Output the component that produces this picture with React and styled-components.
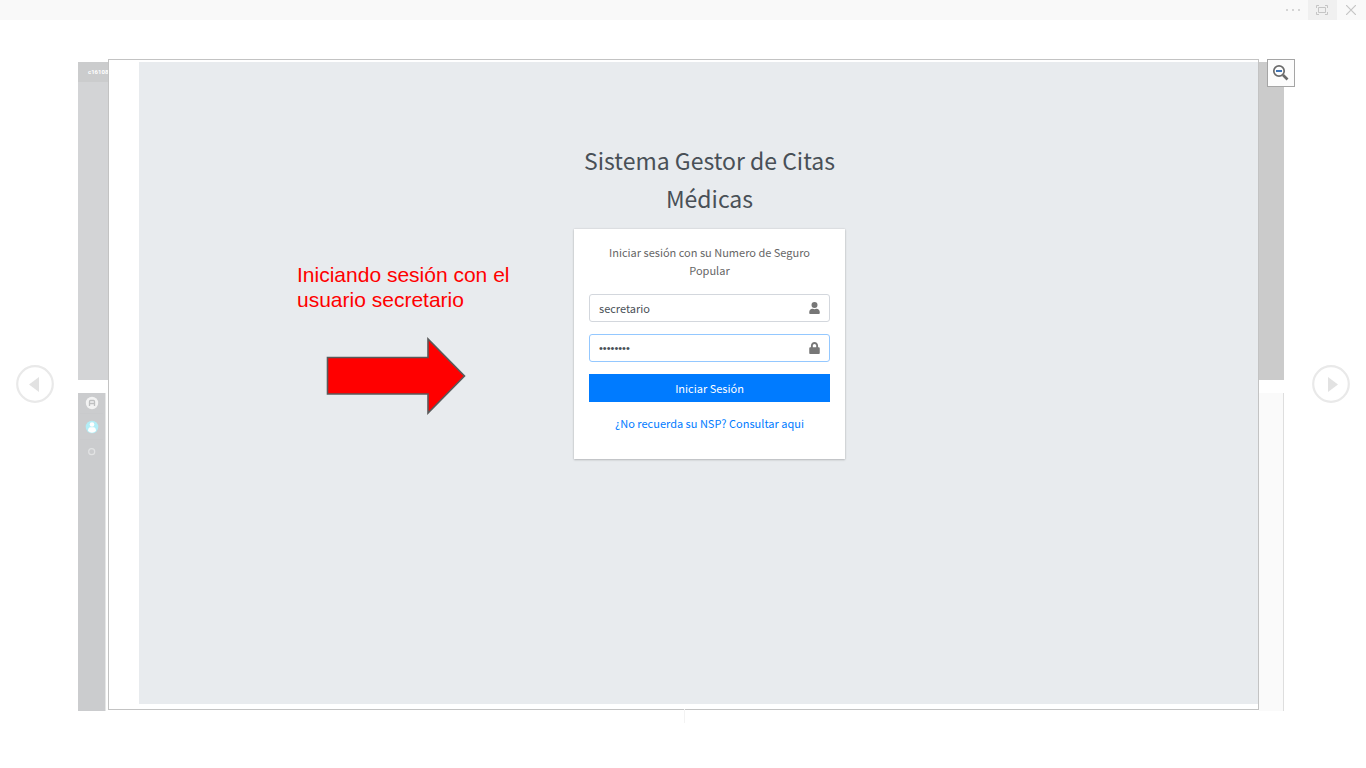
import React from "react";
import styled, { createGlobalStyle } from "styled-components";

const GlobalStyle = createGlobalStyle`
  *, *::before, *::after { box-sizing: border-box; }
  body { margin: 0; background: #fff; font-family: "Liberation Sans", Arial, sans-serif; }
  button, input { font: inherit; }
  h1, p { margin: 0; font-weight: 400; }
`;

const Page = styled.div`
  min-height: 100vh;
  display: flex;
  flex-direction: column;
`;

const TopBar = styled.header`
  height: 20px;
  display: flex;
  justify-content: flex-end;
  background: #f9f9f9;
`;

const BarButton = styled.button`
  width: 29px;
  height: 20px;
  padding: 0 2px 0 0;
  border: 0;
  display: grid;
  place-items: center;
  background: ${(p) => (p.$active ? "#f0f0f0" : "transparent")};
`;

const Viewer = styled.main`
  flex: 1;
  display: flex;
  padding: 39px 0 57px;
`;

const Side = styled.div`
  width: ${(p) => p.$width}px;
  flex: none;
  display: flex;
  align-items: center;
  padding: 0 16px 2px;
  justify-content: ${(p) => p.$align};
`;

const NavButton = styled.button`
  width: 38px;
  height: 38px;
  padding: 0;
  border: 0;
  background: transparent;
  svg { display: block; }
`;

const Strip = styled.div`
  width: ${(p) => p.$width}px;
  flex: none;
  display: flex;
  flex-direction: column;
  gap: 13px;
  padding-top: 3px;
`;

const Slide = styled.div`
  flex: 1 1 0;
  overflow: hidden;
  background: ${(p) => p.$bg};
`;

const SlideTitle = styled.div`
  height: 20px;
  padding-left: 10px;
  font: 700 6px/20px Roboto, sans-serif;
  color: #fff;
  background: #cbcccd;
`;

const MenuSlide = styled(Slide)`
  margin-right: 2px;
  border-right: 1px solid #e6e7e7;
  svg { display: block; }
`;

const EmptySlide = styled(Slide)`
  border-right: 1px solid #dedede;
`;

const Frame = styled.section`
  position: relative;
  flex: 1;
  display: flex;
  margin-bottom: 1px;
  padding: 2px 0 5px 30px;
  border: 1px solid #c3c3c3;
  background: #fff;

  &::after {
    content: "";
    position: absolute;
    top: 100%;
    left: 50%;
    width: 1px;
    height: 14px;
    background: #f3f3f3;
  }
`;

const ZoomButton = styled.button`
  position: absolute;
  top: -1px;
  right: -37px;
  width: 28px;
  height: 28px;
  padding: 0 2px 2px 0;
  display: grid;
  place-items: center;
  border: 1px solid #a5a5a5;
  background: #fcfcfc;
`;

const Canvas = styled.div`
  flex: 1;
  display: grid;
  grid-template-columns: 1fr 271px 1fr;
  align-items: start;
  padding: 79px 0 24px 22px;
  background: #e8ebee;
`;

const Note = styled.div`
  justify-self: end;
  width: 277px;
  padding-top: 121px;
  font-size: 21px;
  line-height: 25px;
  color: #f00;
  svg { display: block; margin: 25px 0 0 29px; }
`;

const Login = styled.form`
  font-family: "Noto Sans CJK SC", sans-serif;
  font-size: 11px;
  text-align: center;
`;

const Title = styled.h1`
  margin-bottom: 12px;
  font-size: 23px;
  line-height: 38px;
  color: #495057;
`;

const Card = styled.div`
  height: 230px;
  padding: 14px 15px;
  display: flex;
  flex-direction: column;
  background: #fff;
  box-shadow: 0 0 2px rgba(0, 0, 0, 0.13), 0 1px 2px rgba(0, 0, 0, 0.18);
`;

const Intro = styled.p`
  padding: 0 16px;
  margin-bottom: 15px;
  line-height: 18px;
  color: #666;
`;

const Field = styled.label`
  height: 28px;
  margin-bottom: 12px;
  padding: 0 9px;
  display: flex;
  align-items: center;
  border: 1px solid ${(p) => (p.$focused ? "#94c8ff" : "#d3d7dd")};
  border-radius: 3px;
  color: #777;
`;

const TextBox = styled.input`
  flex: 1;
  min-width: 0;
  padding: 0;
  border: 0;
  outline: 0;
  background: transparent;
  color: #495057;
  line-height: 18px;
  &[type="password"] { font-family: "Liberation Sans", sans-serif; }
`;

const Submit = styled.button`
  height: 28px;
  padding: 0;
  border: 0;
  line-height: 18px;
  color: #fff;
  background: #007bff;
`;

const Help = styled.a`
  margin-top: 12px;
  line-height: 18px;
  color: #007bff;
  text-decoration: none;
`;

function NavIcon({ next }) {
  return (
    <svg width="38" height="38" viewBox="0 0 38 38">
      <circle cx="19" cy="19" r="17.8" fill="none" stroke="#e9e9e9" strokeWidth="2.2" />
      <path d={next ? "M16 12v15l10-7.5z" : "M23 12v15l-10-7.5z"} fill="#e2e2e2" />
    </svg>
  );
}

export default function App() {
  return (
    <Page>
      <GlobalStyle />
      <TopBar>
        <BarButton type="button" aria-label="Más opciones">
          <svg width="16" height="4" viewBox="0 0 16 4" fill="#d5d5d5">
            <path d="M1 1h2v2H1zM7 1h2v2H7zM13 1h2v2h-2z" />
          </svg>
        </BarButton>
        <BarButton type="button" aria-label="Pantalla completa" $active>
          <svg width="12" height="10" viewBox="0 0 12 10" fill="none" stroke="#c5c5c5">
            <path d="M.5 3V.5H3M9 .5h2.500V3M11.500 7v2.500H9M3 9.500H.5V7M2.500 2.500h7v5h-7z" />
          </svg>
        </BarButton>
        <BarButton type="button" aria-label="Cerrar">
          <svg width="10" height="10" viewBox="0 0 10 10" stroke="#c5c5c5" strokeWidth="1.2">
            <path d="M0 0l10 10M10 0L0 10" />
          </svg>
        </BarButton>
      </TopBar>
      <Viewer>
        <Side $width={78} $align="flex-start">
          <NavButton type="button" aria-label="Anterior"><NavIcon /></NavButton>
        </Side>
        <Strip $width={30}>
          <Slide $bg="#d3d4d6">
            <SlideTitle>c16108</SlideTitle>
          </Slide>
          <MenuSlide $bg="#cbccce">
            <svg width="27" height="80" viewBox="0 0 27 80">
              <circle cx="14" cy="10" r="6.200" fill="#f3f3f3" />
              <path d="M11.500 13V8.500q0-1 1-1h3q1 0 1 1V13M11.500 10.500h5" fill="none" stroke="#bfc0c1" strokeWidth="1.300" />
              <path d="M2 20.500h23M2 46.500h23" stroke="#c9cacc" />
              <circle cx="14" cy="34" r="6.300" fill="#b3eef7" />
              <circle cx="14" cy="31.500" r="2.300" fill="#fff" />
              <path d="M10 38q0-3.800 2.500-3.800h3q2.500 0 2.500 3.800-4 3.500-8 0z" fill="#fff" />
              <circle cx="13.700" cy="58.700" r="3" fill="none" stroke="#e2e3e4" strokeWidth="1.200" />
            </svg>
          </MenuSlide>
        </Strip>
        <Frame>
          <Canvas>
            <Note>
              <p>Iniciando sesión con el<br />usuario secretario</p>
              <svg width="142" height="78" viewBox="0 0 142 78">
                <path d="M1.500 20.500H102V2l36.500 37L102 76V57H1.500z" fill="#f00" stroke="#595959" strokeWidth="1.600" />
              </svg>
            </Note>
            <Login onSubmit={(e) => e.preventDefault()}>
              <Title>Sistema Gestor de Citas Médicas</Title>
              <Card>
                <Intro>Iniciar sesión con su Numero de Seguro Popular</Intro>
                <Field>
                  <TextBox type="text" aria-label="Usuario" defaultValue="secretario" />
                  <svg width="11" height="12" viewBox="0 0 448 512" fill="currentColor">
                    <path d="M224 256a128 128 0 1 0 0-256 128 128 0 0 0 0 256zm90 32h-17a174 174 0 0 1-146 0h-17C60 288 0 348 0 422v42c0 27 21 48 48 48h352c27 0 48-21 48-48v-42c0-74-60-134-134-134z" />
                  </svg>
                </Field>
                <Field $focused>
                  <TextBox type="password" aria-label="Contraseña" defaultValue="12345678" />
                  <svg width="11" height="12" viewBox="0 0 448 512" fill="currentColor">
                    <path d="M400 224h-24v-72C376 68 308 0 224 0S72 68 72 152v72H48c-27 0-48 21-48 48v192c0 27 21 48 48 48h352c27 0 48-21 48-48V272c0-27-21-48-48-48zm-104 0H152v-72c0-40 32-72 72-72s72 32 72 72z" />
                  </svg>
                </Field>
                <Submit type="submit">Iniciar Sesión</Submit>
                <Help href="#consultar">¿No recuerda su NSP? Consultar aqui</Help>
              </Card>
            </Login>
          </Canvas>
          <ZoomButton type="button" aria-label="Alejar">
            <svg width="17" height="17" viewBox="0 0 17 17" fill="none">
              <circle cx="7" cy="7" r="5.200" stroke="#6b6b6b" strokeWidth="1.700" />
              <path d="M11 11l4.500 4.500" stroke="#6b6b6b" strokeWidth="2.600" />
              <path d="M4 7h6" stroke="#3f74b5" strokeWidth="2" />
            </svg>
          </ZoomButton>
        </Frame>
        <Strip $width={25}>
          <Slide $bg="#cbcbcb" />
          <EmptySlide $bg="#fafafa" />
        </Strip>
        <Side $width={82} $align="flex-end">
          <NavButton type="button" aria-label="Siguiente"><NavIcon next /></NavButton>
        </Side>
      </Viewer>
    </Page>
  );
}
